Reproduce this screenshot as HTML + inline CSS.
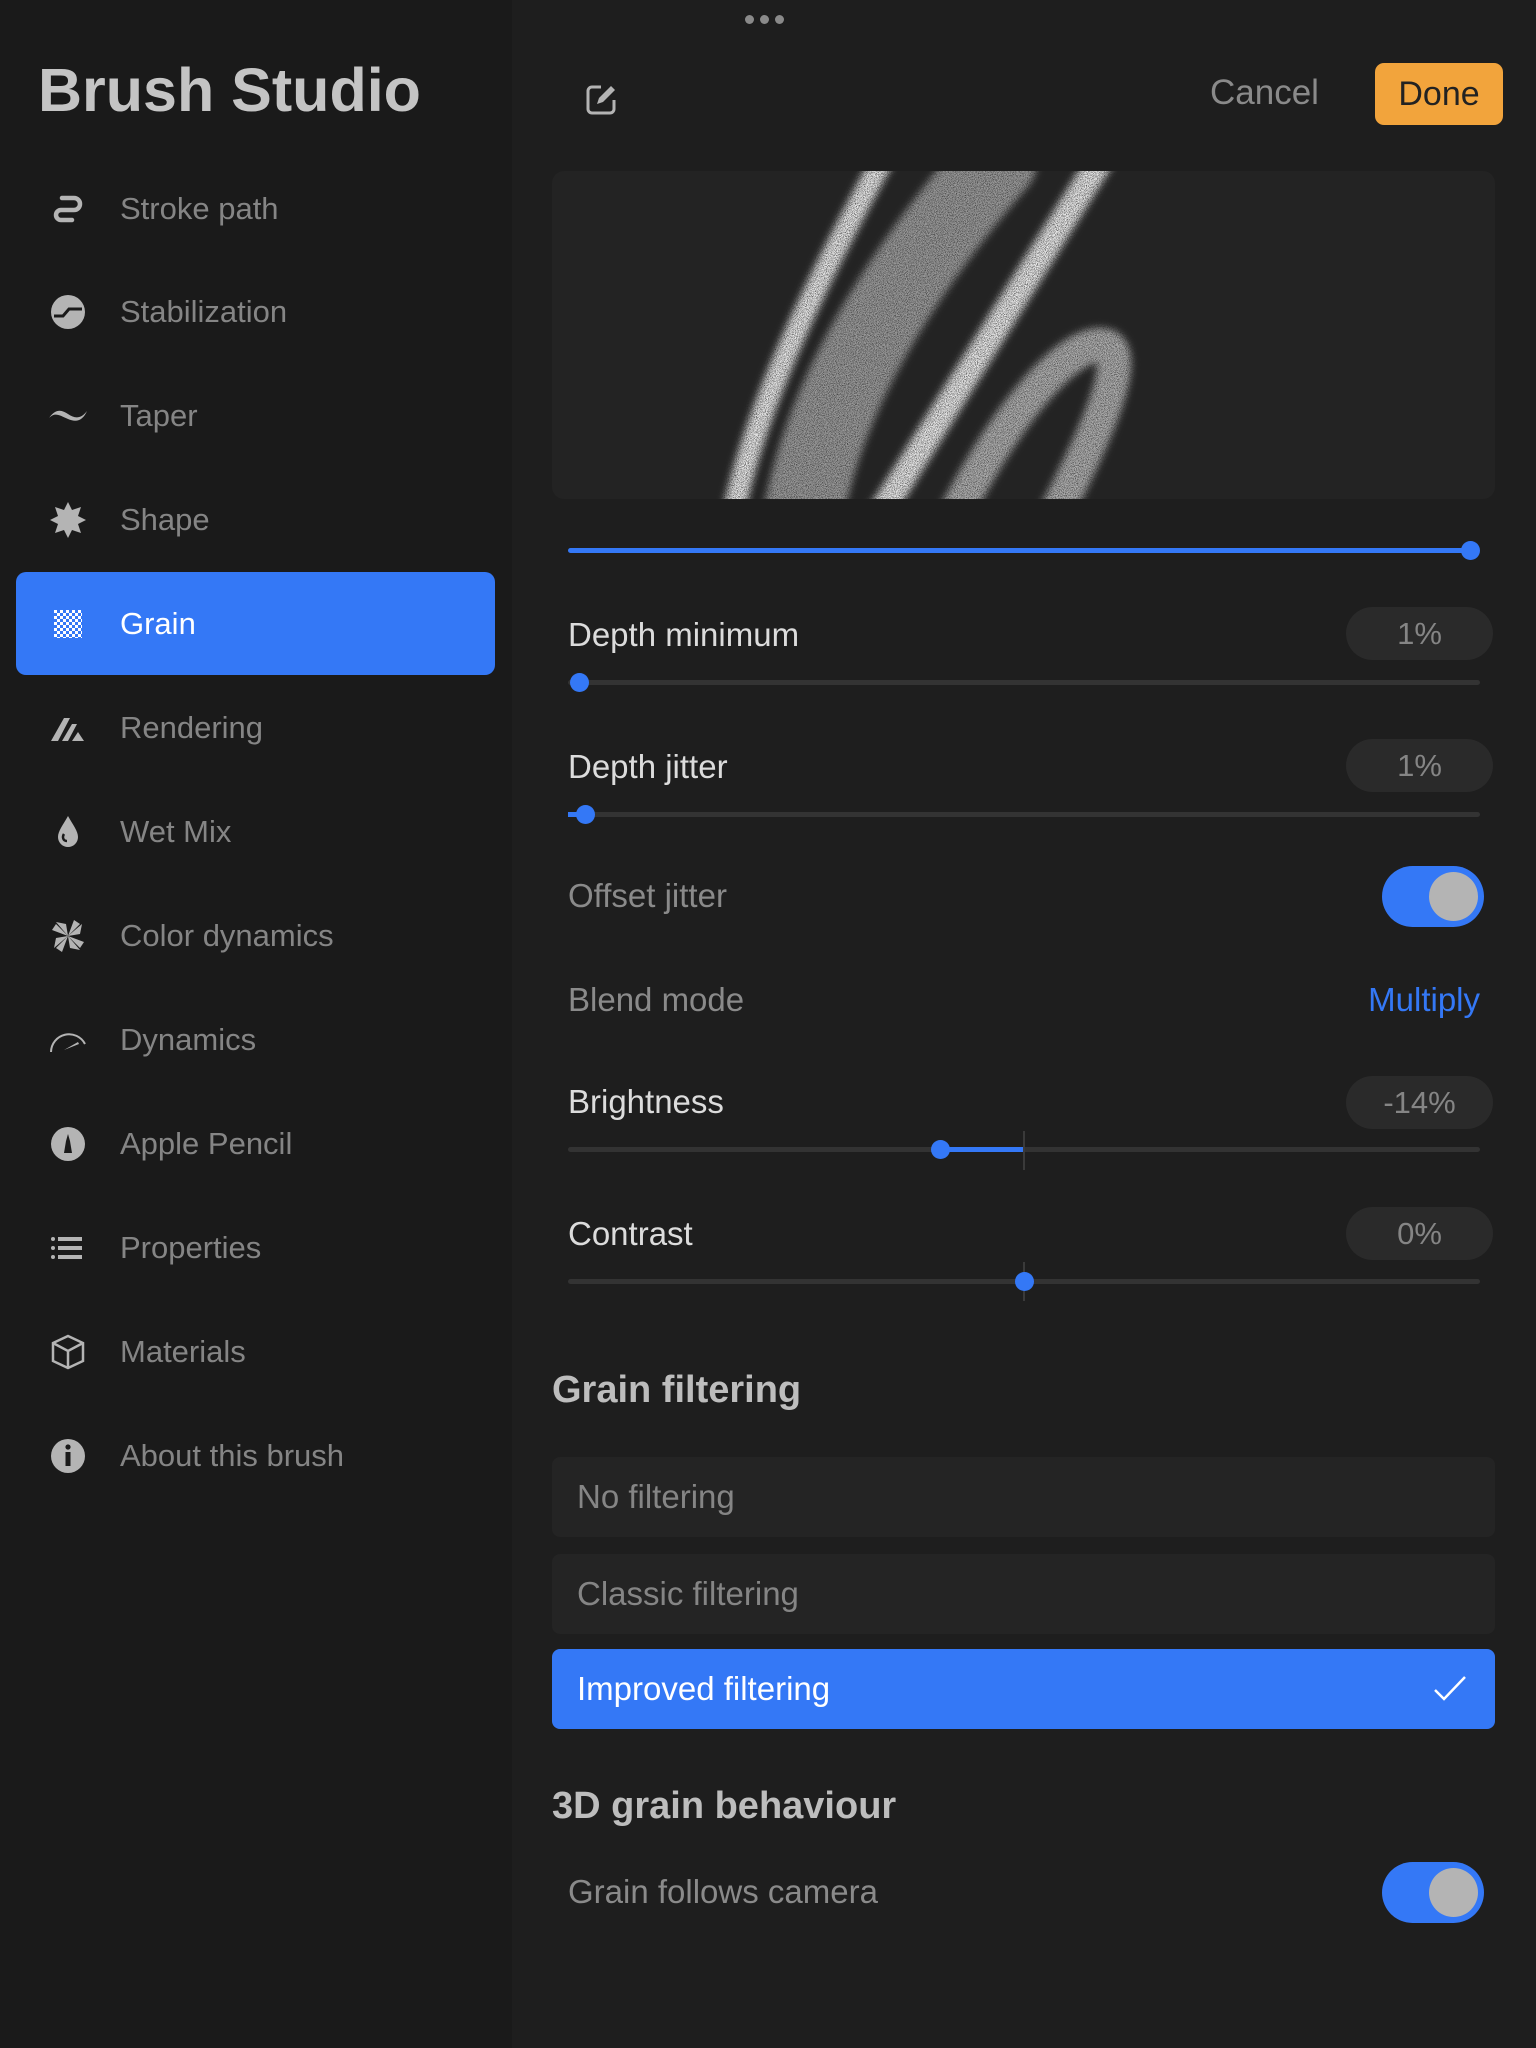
<!DOCTYPE html>
<html><head><meta charset="utf-8"><style>
*{margin:0;padding:0;box-sizing:border-box}
body{width:1536px;height:2048px;background:#1e1e1e;font-family:"Liberation Sans",sans-serif;position:relative;overflow:hidden}
.side{position:absolute;left:0;top:0;width:512px;height:2048px;background:#1a1a1a}
.a{position:absolute;white-space:nowrap}
.mi{position:absolute;left:120px;font-size:31px;color:#858585;line-height:40px}
.ic{position:absolute;left:48px;width:40px;height:40px}
.lbl{position:absolute;left:568px;font-size:33px;color:#dcdcdc;line-height:40px}
.dim{color:#8a8a8a}
.pill{position:absolute;left:1346px;width:147px;height:53px;border-radius:27px;background:#2a2a2a;color:#858585;font-size:31px;text-align:center;line-height:53px}
.trk{position:absolute;left:568px;width:912px;height:5px;background:#333;border-radius:3px}
.th{position:absolute;width:19px;height:19px;border-radius:50%;background:#3478f6}
.tg{position:absolute;left:1382px;width:102px;height:61px;border-radius:31px;background:#3478f6}
.tg i{position:absolute;right:6px;top:6px;width:49px;height:49px;border-radius:50%;background:#b4b4b4}
.opt{position:absolute;left:552px;width:943px;height:80px;background:#242424;border-radius:8px;font-size:33px;color:#858585;line-height:80px;padding-left:25px}
.hd{position:absolute;left:552px;font-size:38px;font-weight:bold;color:#bdbdbd;line-height:44px}
</style></head><body>
<div class="side"></div>
<div class="a" style="left:745px;top:15px;font-size:0">
<span style="display:inline-block;width:9px;height:9px;border-radius:50%;background:#8a8a8a;margin-right:6px"></span><span style="display:inline-block;width:9px;height:9px;border-radius:50%;background:#8a8a8a;margin-right:6px"></span><span style="display:inline-block;width:9px;height:9px;border-radius:50%;background:#8a8a8a"></span></div>
<div class="a" style="left:38px;top:54px;font-size:61px;font-weight:bold;color:#c4c4c4;line-height:72px">Brush Studio</div>

<svg class="ic" style="top:189px" viewBox="0 0 40 40"><path d="M14 9h12a6 6 0 0 1 0 12H13a5 5 0 0 0 0 10h11" fill="none" stroke="#b4b4b4" stroke-width="4.5" stroke-linecap="round"/></svg>
<div class="mi" style="top:189px">Stroke path</div>
<svg class="ic" style="top:292px" viewBox="0 0 40 40"><circle cx="20" cy="20" r="17" fill="#b4b4b4"/><path d="M6 24h9l6-7h13" fill="none" stroke="#1a1a1a" stroke-width="3"/></svg>
<div class="mi" style="top:292px">Stabilization</div>
<svg class="ic" style="top:396px" viewBox="0 0 40 40"><path d="M1 22C8 12 14 14 20 18s12 6 19-3c-4 9-10 12-19 8S7 16 1 22z" fill="#b4b4b4"/></svg>
<div class="mi" style="top:396px">Taper</div>
<svg class="ic" style="top:500px" viewBox="0 0 40 40"><polygon points="20,2 24,10 33,7 30,16 38,20 30,24 33,33 24,30 20,38 16,30 7,33 10,24 2,20 10,16 7,7 16,10" fill="#b4b4b4"/></svg>
<div class="mi" style="top:500px">Shape</div>
<div class="a" style="left:16px;top:572px;width:479px;height:103px;background:#3478f6;border-radius:10px"></div>
<svg class="ic" style="top:604px" viewBox="0 0 40 40"><defs><pattern id="ck" width="6" height="6" patternUnits="userSpaceOnUse"><rect width="3" height="3" fill="#fff"/><rect x="3" y="3" width="3" height="3" fill="#fff"/></pattern></defs><rect x="6" y="6" width="28" height="28" fill="url(#ck)"/></svg>
<div class="mi" style="top:604px;color:#fff">Grain</div>
<svg class="ic" style="top:708px" viewBox="0 0 40 40"><path d="M3 33L16 10h6L10 33zM14 33L24 16h5L20 33zM24 33l6-9 6 9z" fill="#b4b4b4"/></svg>
<div class="mi" style="top:708px">Rendering</div>
<svg class="ic" style="top:812px" viewBox="0 0 40 40"><path d="M20 4C15 13 10 19 10 25a10 10 0 0 0 20 0c0-6-5-12-10-21z" fill="#b4b4b4"/><path d="M16 22c-2 3-1 7 3 7" fill="none" stroke="#1a1a1a" stroke-width="2.5"/></svg>
<div class="mi" style="top:812px">Wet Mix</div>
<svg class="ic" style="top:916px" viewBox="0 0 40 40"><g fill="#b4b4b4"><path d="M20 20L8 6l10 2z"/><path d="M20 20L34 8l-2 10z"/><path d="M20 20L32 34l-10-2z"/><path d="M20 20L6 32l2-10z"/><path d="M20 20L4 14l4-6z"/><path d="M20 20l16 6-4 6z"/><path d="M20 20l-6 16-6-4z"/><path d="M20 20l6-16 6 4z"/></g></svg>
<div class="mi" style="top:916px">Color dynamics</div>
<svg class="ic" style="top:1020px" viewBox="0 0 40 40"><path d="M3 32A18 18 0 0 1 37 24" fill="none" stroke="#b4b4b4" stroke-width="2"/><path d="M16 30l14-8 1 2z" fill="#b4b4b4"/></svg>
<div class="mi" style="top:1020px">Dynamics</div>
<svg class="ic" style="top:1124px" viewBox="0 0 40 40"><circle cx="20" cy="20" r="17" fill="#b4b4b4"/><path d="M16 29l2-12 2-7 2 7 2 12z" fill="#1a1a1a"/></svg>
<div class="mi" style="top:1124px">Apple Pencil</div>
<svg class="ic" style="top:1228px" viewBox="0 0 40 40"><g fill="#b4b4b4"><circle cx="5" cy="11" r="2"/><circle cx="5" cy="20" r="2"/><circle cx="5" cy="29" r="2"/><rect x="10" y="9" width="24" height="4"/><rect x="10" y="18" width="24" height="4"/><rect x="10" y="27" width="24" height="4"/></g></svg>
<div class="mi" style="top:1228px">Properties</div>
<svg class="ic" style="top:1332px" viewBox="0 0 40 40"><path d="M20 4L35 11v18L20 36 5 29V11zM5 11l15 8 15-8M20 19v17" fill="none" stroke="#b4b4b4" stroke-width="2.5"/></svg>
<div class="mi" style="top:1332px">Materials</div>
<svg class="ic" style="top:1436px" viewBox="0 0 40 40"><circle cx="20" cy="20" r="17" fill="#b4b4b4"/><circle cx="20" cy="11" r="2.6" fill="#1a1a1a"/><rect x="17.5" y="16" width="5" height="14" fill="#1a1a1a"/></svg>
<div class="mi" style="top:1436px">About this brush</div>

<svg class="a" style="left:585px;top:82px" width="34" height="34" viewBox="0 0 34 34"><path d="M16 5H7a4 4 0 0 0-4 4v18a4 4 0 0 0 4 4h18a4 4 0 0 0 4-4v-9" fill="none" stroke="#b4b4b4" stroke-width="3"/><path d="M12 22l2-6 12-12 4 4-12 12z" fill="#b4b4b4"/></svg>
<div class="a" style="left:1210px;top:73px;font-size:35px;color:#8a8a8a;line-height:40px">Cancel</div>
<div class="a" style="left:1375px;top:63px;width:128px;height:62px;background:#f2a43c;border-radius:9px;font-size:34px;color:#222;text-align:center;line-height:62px">Done</div>

<svg class="a" style="left:552px;top:171px" width="943" height="328" viewBox="0 0 943 328">
<defs>
<clipPath id="cp"><rect width="943" height="328" rx="12"/></clipPath>
<filter id="gr" x="-20%" y="-20%" width="140%" height="140%">
<feGaussianBlur in="SourceGraphic" stdDeviation="4" result="b"/>
<feTurbulence type="fractalNoise" baseFrequency="1.1" numOctaves="2" seed="3" result="n"/>
<feColorMatrix in="n" type="matrix" values="0 0 0 0 0.82 0 0 0 0 0.82 0 0 0 0 0.82 0 0 0 2.2 -0.3" result="na"/>
<feComposite in="na" in2="b" operator="in"/>
</filter>
</defs>
<rect width="943" height="328" rx="12" fill="#232323"/>
<g clip-path="url(#cp)" fill="none" stroke="#fff" stroke-linecap="round" filter="url(#gr)">
<path d="M445 -10C350 100 275 220 252 340" stroke-width="80" opacity="0.6"/>
<path d="M330 -10C270 100 205 230 182 340" stroke-width="22"/>
<path d="M548 -10L330 340" stroke-width="26"/>
<path d="M405 340C465 225 525 165 555 175C580 190 535 280 505 340" stroke-width="34" opacity="0.7"/>
</g>
</svg>
<div class="a" style="left:568px;top:548px;width:902px;height:5px;background:#3478f6;border-radius:3px"></div>
<div class="th" style="left:1461px;top:541px"></div>

<div class="lbl" style="top:615px">Depth minimum</div>
<div class="pill" style="top:607px">1%</div>
<div class="trk" style="top:680px"></div>
<div class="th" style="left:570px;top:673px"></div>
<div class="lbl" style="top:747px">Depth jitter</div>
<div class="pill" style="top:739px">1%</div>
<div class="trk" style="top:812px"></div>
<div class="a" style="left:568px;top:812px;width:18px;height:5px;background:#3478f6"></div>
<div class="th" style="left:576px;top:805px"></div>
<div class="lbl dim" style="top:876px">Offset jitter</div>
<div class="tg" style="top:866px"><i></i></div>
<div class="lbl dim" style="top:980px">Blend mode</div>
<div class="a" style="right:56px;top:980px;font-size:33px;color:#3478f6;line-height:40px">Multiply</div>
<div class="lbl" style="top:1082px">Brightness</div>
<div class="pill" style="top:1076px">-14%</div>
<div class="trk" style="top:1147px"></div>
<div class="a" style="left:940px;top:1147px;width:84px;height:5px;background:#3478f6"></div>
<div class="a" style="left:1023px;top:1131px;width:2px;height:39px;background:#3a3a3a"></div>
<div class="th" style="left:931px;top:1140px"></div>
<div class="lbl" style="top:1214px">Contrast</div>
<div class="pill" style="top:1207px">0%</div>
<div class="trk" style="top:1279px"></div>
<div class="a" style="left:1023px;top:1262px;width:2px;height:39px;background:#3a3a3a"></div>
<div class="th" style="left:1015px;top:1272px"></div>

<div class="hd" style="top:1368px">Grain filtering</div>
<div class="opt" style="top:1457px">No filtering</div>
<div class="opt" style="top:1554px">Classic filtering</div>
<div class="opt" style="top:1649px;background:#3478f6;color:#fff">Improved filtering</div>
<svg class="a" style="left:1432px;top:1674px" width="36" height="30" viewBox="0 0 36 30"><path d="M3 16l9 9L33 3" fill="none" stroke="#fff" stroke-width="2.5"/></svg>

<div class="hd" style="top:1784px">3D grain behaviour</div>
<div class="lbl dim" style="top:1872px">Grain follows camera</div>
<div class="tg" style="top:1862px"><i></i></div>
</body></html>
